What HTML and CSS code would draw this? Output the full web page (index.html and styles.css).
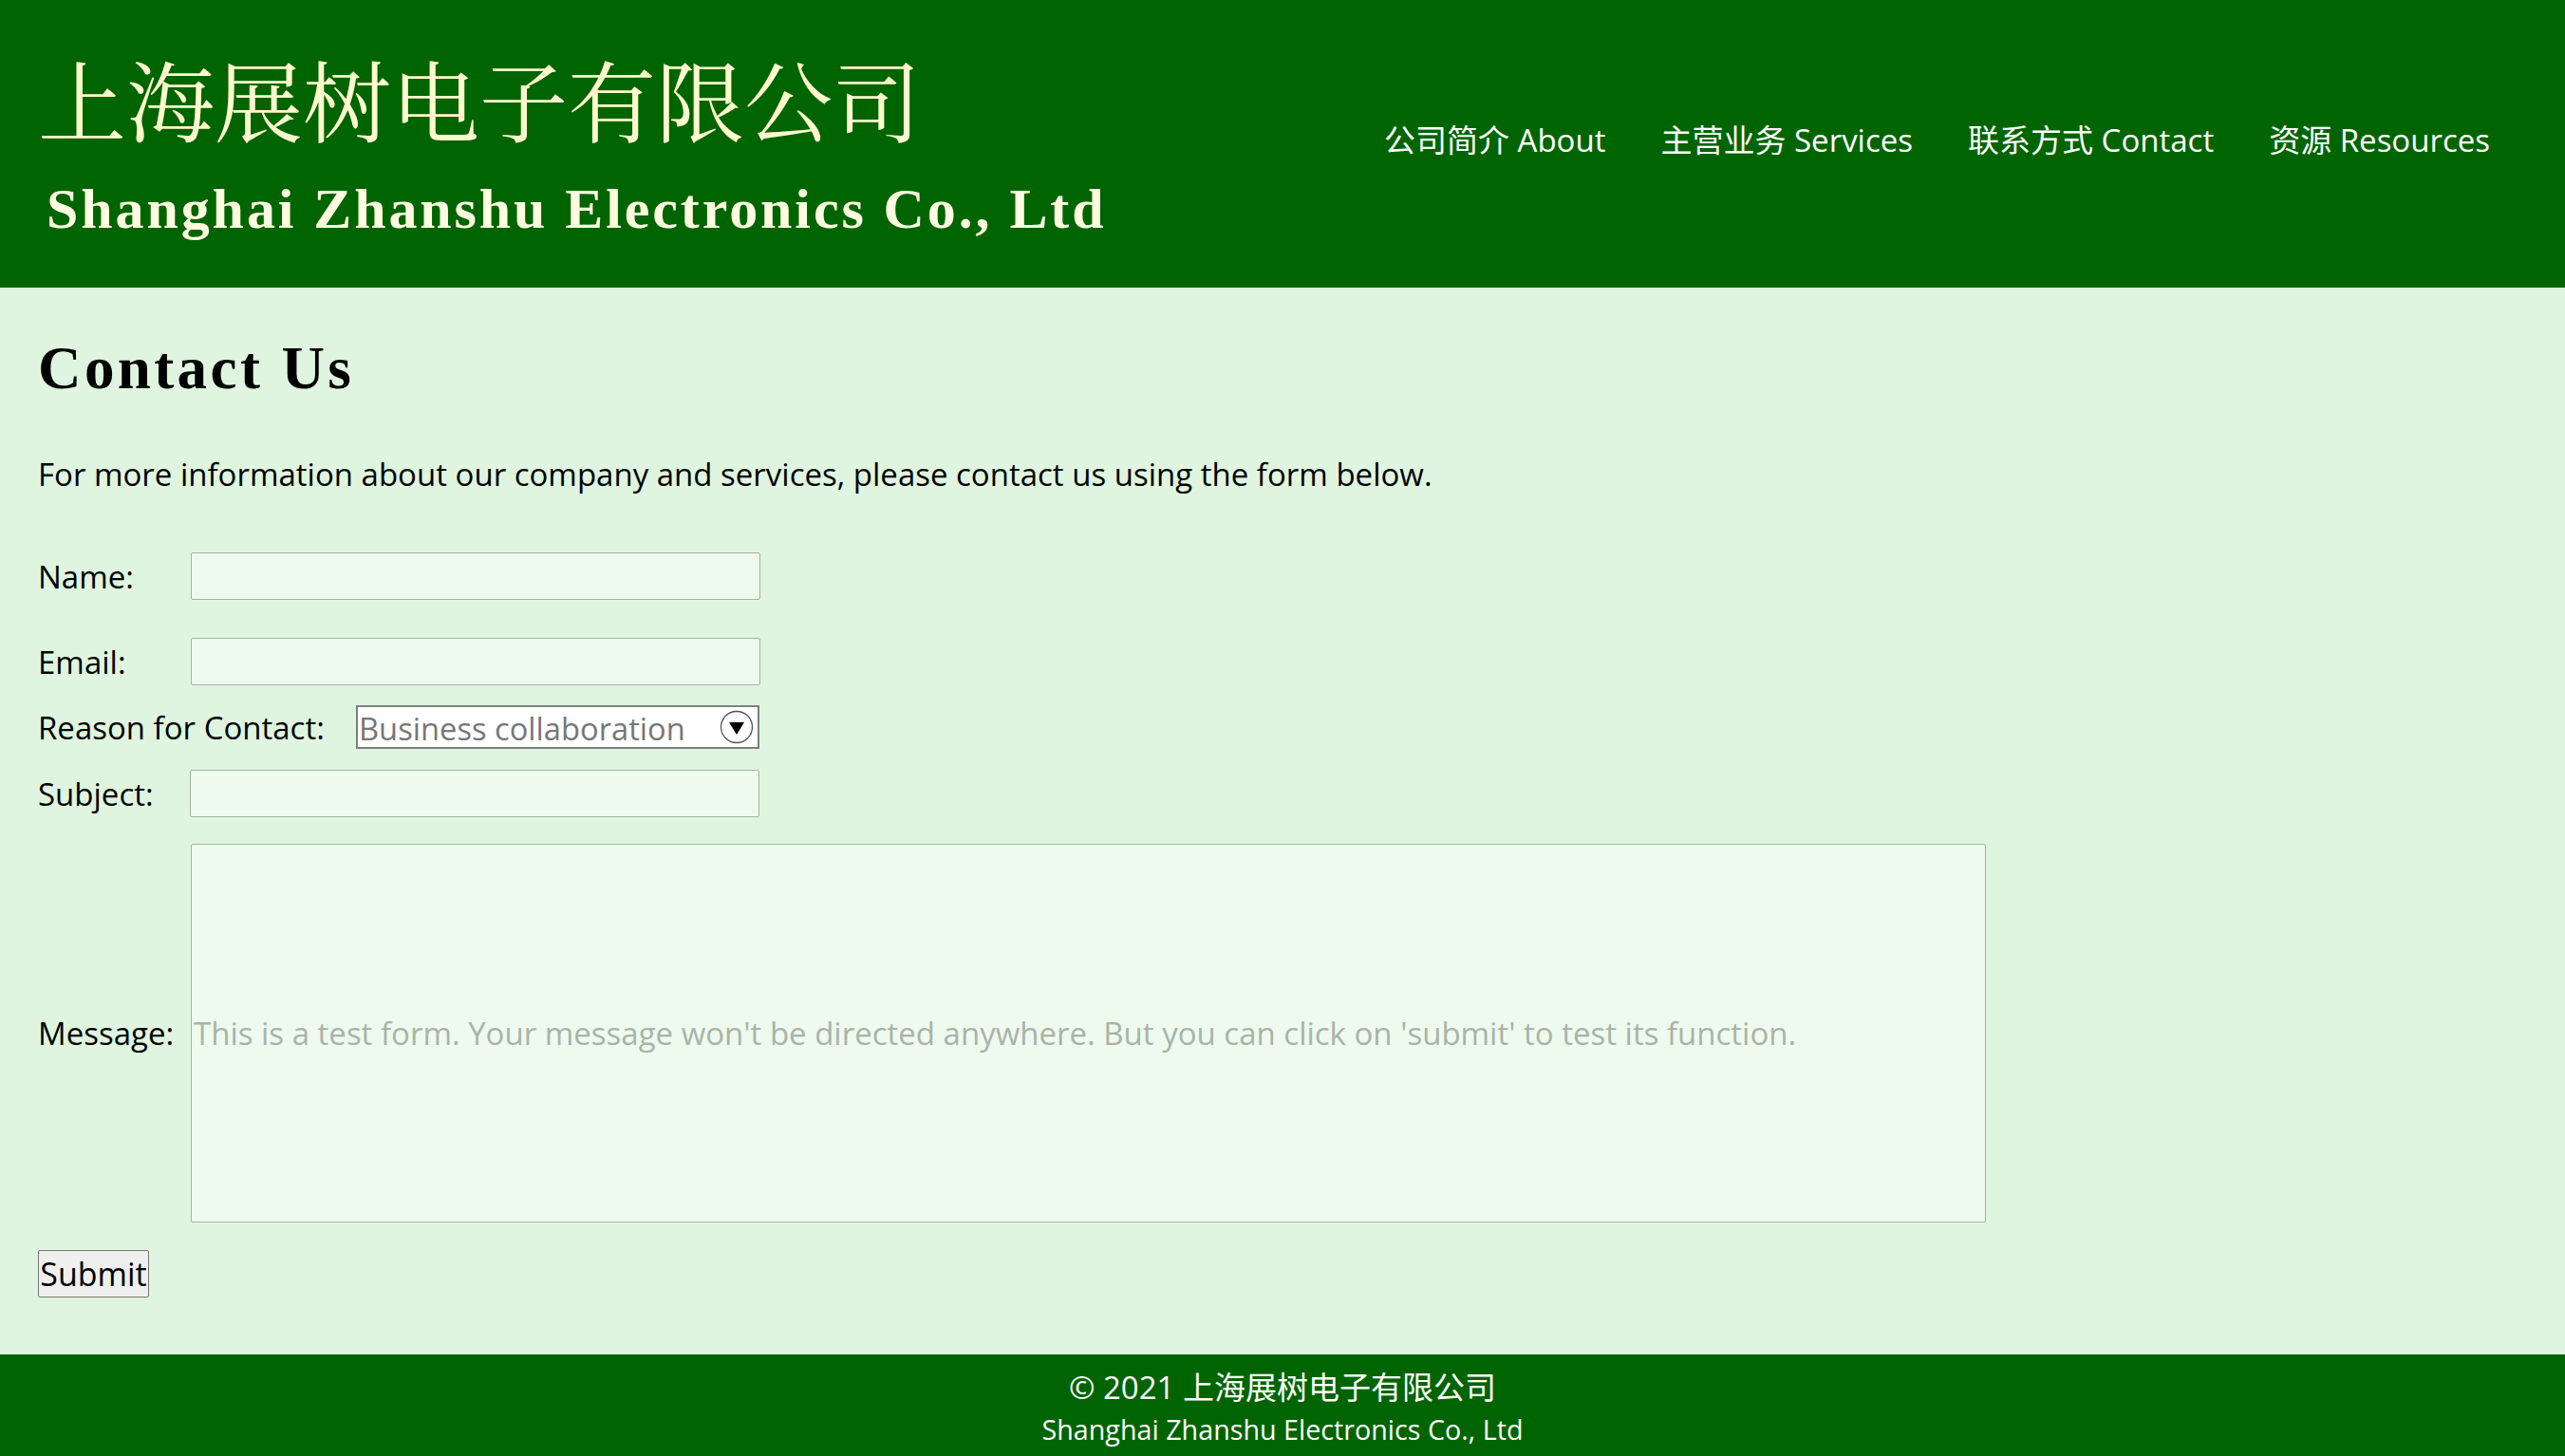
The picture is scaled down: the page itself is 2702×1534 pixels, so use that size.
FILE: index.html
```html
<!DOCTYPE html>
<html lang="zh-CN">
<head>
<meta charset="utf-8">
<title>Contact Us - 上海展树电子有限公司</title>
<link rel="stylesheet" href="styles.css">
</head>
<body>
<header class="site-header">
  <div class="brand">
    <div class="brand-cn">上海展树电子有限公司</div>
    <div class="brand-en">Shanghai Zhanshu Electronics Co., Ltd</div>
  </div>
  <nav class="nav">
    <a href="#" class="nav-link">公司简介 About</a>
    <a href="#" class="nav-link">主营业务 Services</a>
    <a href="#" class="nav-link">联系方式 Contact</a>
    <a href="#" class="nav-link">资源 Resources</a>
  </nav>
</header>

<main class="content">
  <h1 class="page-title">Contact Us</h1>
  <p class="intro">For more information about our company and services, please contact us using the form below.</p>

  <form class="contact-form">
    <div class="row row-name">
      <label class="label" for="name">Name:</label>
      <input class="field" id="name" type="text">
    </div>
    <div class="row row-email">
      <label class="label" for="email">Email:</label>
      <input class="field" id="email" type="email">
    </div>
    <div class="row row-reason">
      <label class="label label-wide" for="reason">Reason for Contact:</label>
      <div class="select-wrap">
        <select class="select" id="reason">
          <option>Business collaboration</option>
          <option>Product inquiry</option>
          <option>Other</option>
        </select>
        <svg class="select-icon" width="36" height="36" viewBox="0 0 36 36" aria-hidden="true">
          <circle cx="18" cy="18" r="16.5" fill="#ffffff" stroke="#555555" stroke-width="1.3"/>
          <path d="M10 13 L26 13 L18 26 Z" fill="#000000"/>
        </svg>
      </div>
    </div>
    <div class="row row-subject">
      <label class="label" for="subject">Subject:</label>
      <input class="field" id="subject" type="text">
    </div>
    <div class="row row-message">
      <label class="label label-message" for="message">Message:</label>
      <input class="field field-message" id="message" type="text" placeholder="This is a test form. Your message won't be directed anywhere. But you can click on 'submit' to test its function.">
    </div>
    <div class="row row-submit">
      <button class="submit" type="submit">Submit</button>
    </div>
  </form>
</main>

<footer class="site-footer">
  <div class="footer-line1">© 2021 上海展树电子有限公司</div>
  <div class="footer-line2">Shanghai Zhanshu Electronics Co., Ltd</div>
</footer>
</body>
</html>
```

FILE: styles.css
```css
* {
  box-sizing: border-box;
}

html, body {
  margin: 0;
  padding: 0;
}

body {
  background: #dff5df;
  font-family: "Open Sans", "Noto Sans", "Noto Sans CJK SC", sans-serif;
  color: #000000;
}

/* Header */
.site-header {
  background: #006400;
  height: 303px;
  padding: 57px 79px 0 40px;
  display: flex;
  justify-content: space-between;
  align-items: flex-start;
}

.brand-cn {
  font-family: "Noto Serif CJK SC", "Noto Sans CJK SC", serif;
  font-size: 93px;
  line-height: 93px;
  color: #fffacd;
  white-space: nowrap;
}

.brand-en {
  margin-top: 40px;
  margin-left: 9px;
  font-family: "Liberation Serif", serif;
  font-weight: bold;
  font-size: 60px;
  line-height: 60px;
  letter-spacing: 2.9px;
  color: #fffbe0;
  white-space: nowrap;
}

.nav {
  display: flex;
  gap: 58px;
  margin-top: 69px;
}

.nav-link {
  font-family: "Open Sans", "Noto Sans CJK SC", sans-serif;
  font-size: 33px;
  line-height: 44px;
  color: #ffffff;
  text-decoration: none;
  white-space: nowrap;
}

/* Main content */
.content {
  padding: 54px 40px 60px 40px;
}

.page-title {
  margin: 0;
  font-family: "Liberation Serif", serif;
  font-weight: bold;
  font-size: 63px;
  line-height: 63px;
  letter-spacing: 3.4px;
}

.intro {
  margin: 63px 0 0 0;
  font-size: 33px;
  line-height: 33px;
}

.contact-form {
  margin-top: 66px;
  display: flex;
  flex-direction: column;
}

.row {
  display: flex;
  align-items: center;
}

.row-email {
  margin-top: 40px;
}

.row-reason {
  margin-top: 21px;
}

.row-subject {
  margin-top: 22px;
}

.row-message {
  margin-top: 28px;
}

.row-submit {
  margin-top: 29px;
}

.label {
  width: 161px;
  flex: none;
  font-size: 33px;
  line-height: 33px;
}

.label-wide {
  width: 335px;
}

.field {
  width: 600px;
  height: 50px;
  margin: 0;
  padding: 0 2px;
  background: #eefaee;
  border: 1px solid #a3b3a3;
  border-radius: 2px;
  font-family: "Open Sans", "Noto Sans", sans-serif;
  font-size: 33px;
  color: #000000;
}

.row-subject .field {
  margin-left: -1px;
}

.field-message {
  width: 1891px;
  height: 399px;
  color: #000000;
}

.field-message::placeholder {
  color: #a8b4a8;
}

.select-wrap {
  position: relative;
  width: 425px;
  height: 46px;
}

.select {
  appearance: none;
  -webkit-appearance: none;
  width: 425px;
  height: 46px;
  margin: 0;
  padding: 0 0 0 1px;
  background: #ffffff;
  border: 2px solid #7d807d;
  border-radius: 0;
  font-family: "Open Sans", "Noto Sans", sans-serif;
  font-size: 32.7px;
  color: #777777;
}

.select-icon {
  position: absolute;
  right: 6px;
  top: 5px;
  pointer-events: none;
}

.submit {
  width: 117px;
  height: 50px;
  padding: 0;
  background: #efefef;
  border: 1px solid #767676;
  border-radius: 2px;
  font-family: "Open Sans", "Noto Sans", sans-serif;
  font-size: 34px;
  line-height: 1;
  color: #000000;
}

/* Footer */
.site-footer {
  background: #006400;
  color: #ffffff;
  text-align: center;
  padding: 13px 0 7px 0;
}

.footer-line1 {
  font-family: "Open Sans", "Noto Sans CJK SC", sans-serif;
  font-size: 33px;
  line-height: 44px;
}

.footer-line2 {
  font-family: "Open Sans", "Noto Sans CJK SC", sans-serif;
  font-size: 28.7px;
  line-height: 44px;
}
```
